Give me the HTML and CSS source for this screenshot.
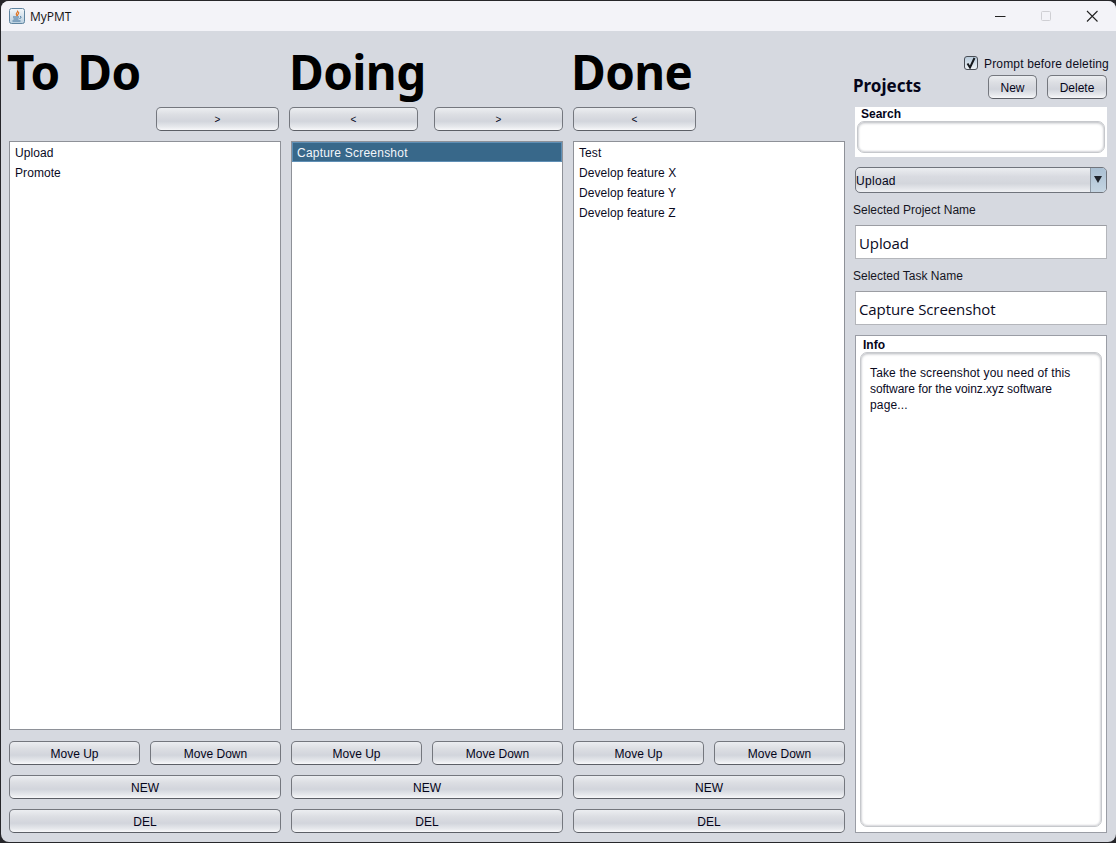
FILE: index.html
```html
<!DOCTYPE html>
<html lang="en">
<head>
<meta charset="utf-8">
<title>MyPMT</title>
<link rel="stylesheet" href="styles.css">
</head>
<body>
<div class="window">
  <header class="titlebar">
    <svg class="app-icon" width="16" height="16" viewBox="0 0 16 16">
      <defs><linearGradient id="ic" x1="0" y1="0" x2="0" y2="1"><stop offset="0" stop-color="#f4f7fa"/><stop offset="1" stop-color="#b9cfe0"/></linearGradient></defs>
      <rect x="0.5" y="0.5" width="15" height="15" rx="2" fill="url(#ic)" stroke="#5f84a0"/>
      <path d="M8.500 2.500c1.200 1.400-2 2.600-1.200 4.200.3.600.8 1 1 1.300-.2-1.400 2.400-2.200 1.200-4.200" fill="none" stroke="#e0701c" stroke-width="1.100"/>
      <path d="M4 9h6M4.500 11h5M3.500 13h8M11 8.500c1.500-.3 1.500 1.700-.5 2" fill="none" stroke="#3f6f99" stroke-width="1"/>
    </svg>
    <span class="app-title">MyPMT</span>
    <div class="controls">
      <svg class="ctl" width="46" height="30" viewBox="0 0 46 30"><path d="M18 15.500h10.500" stroke="#222" stroke-width="1" fill="none"/></svg>
      <svg class="ctl" width="46" height="30" viewBox="0 0 46 30"><rect x="18.500" y="10.500" width="9" height="9" rx="1" fill="none" stroke="#cfcfd4"/></svg>
      <svg class="ctl" width="46" height="30" viewBox="0 0 46 30"><path d="M18 10l10.500 10.500M28.500 10L18 20.500" stroke="#222" stroke-width="1.100" fill="none"/></svg>
    </div>
  </header>
  <main class="content">
    <section class="board">
      <div class="headings">
        <h1 class="col-title">To Do</h1>
        <h1 class="col-title">Doing</h1>
        <h1 class="col-title">Done</h1>
      </div>
      <div class="arrows">
        <button class="btn arrow arrow-short first">&gt;</button>
        <button class="btn arrow arrow-long">&lt;</button>
        <button class="btn arrow arrow-long wide-gap">&gt;</button>
        <button class="btn arrow arrow-short last">&lt;</button>
      </div>
      <div class="triple lists">
        <ul class="list"><li>Upload</li><li>Promote</li></ul>
        <ul class="list"><li class="selected">Capture Screenshot</li></ul>
        <ul class="list"><li>Test</li><li>Develop feature X</li><li>Develop feature Y</li><li>Develop feature Z</li></ul>
      </div>
      <div class="triple moves">
        <div class="move-pair"><button class="btn">Move Up</button><button class="btn">Move Down</button></div>
        <div class="move-pair"><button class="btn">Move Up</button><button class="btn">Move Down</button></div>
        <div class="move-pair"><button class="btn">Move Up</button><button class="btn">Move Down</button></div>
      </div>
      <div class="triple actions">
        <button class="btn">NEW</button><button class="btn">NEW</button><button class="btn">NEW</button>
      </div>
      <div class="triple actions">
        <button class="btn">DEL</button><button class="btn">DEL</button><button class="btn">DEL</button>
      </div>
    </section>
    <aside class="side">
      <label class="prompt">
        <span class="check"><svg width="10" height="12" viewBox="0 0 10 12"><path d="M1.500 6.500L4 10.500L8.500 1" fill="none" stroke="#15181c" stroke-width="2"/></svg></span>
        <span class="prompt-text">Prompt before deleting</span>
      </label>
      <div class="projects-row">
        <h2 class="projects-title">Projects</h2>
        <button class="btn new-btn">New</button>
        <button class="btn delete-btn">Delete</button>
      </div>
      <div class="search-panel">
        <div class="panel-label">Search</div>
        <div class="rounded-field search-field"></div>
      </div>
      <div class="combo"><span class="combo-text">Upload</span><span class="combo-arrow"></span></div>
      <div class="field-label">Selected Project Name</div>
      <div class="text-field">Upload</div>
      <div class="field-label">Selected Task Name</div>
      <div class="text-field">Capture Screenshot</div>
      <div class="info-panel">
        <div class="panel-label info-label">Info</div>
        <div class="rounded-field info-field">Take the screenshot you need of this <span class="tight">software for the voinz.xyz software</span> page...</div>
      </div>
    </aside>
  </main>
</div>
</body>
</html>
```
FILE: styles.css
```css
* { box-sizing: border-box; }
html, body { margin: 0; height: 100%; background: #26262a; overflow: hidden; }
body { padding: 1px 0 1px 1px; font: 12px "Liberation Sans", Arial, sans-serif; color: #000; }
.window {
  height: 841px;
  background: #d6d9e0;
  border-radius: 8px;
  overflow: hidden;
  display: flex;
  flex-direction: column;
}
.titlebar {
  height: 30px;
  flex: none;
  background: #f3f3f8;
  display: flex;
  align-items: center;
  padding-left: 8px;
}
.app-icon { flex: none; margin-top: -1px; }
.app-title { margin-left: 5px; font: 12px "Open Sans", sans-serif; color: #111; }
.controls { margin-left: auto; display: flex; padding-right: 1px; }
.ctl { display: block; }
.content { flex: 1; display: flex; min-height: 0; }
.board { width: 845px; flex: none; padding-left: 8px; display: flex; flex-direction: column; }
.headings { height: 76px; display: grid; grid-template-columns: repeat(3, 272px); column-gap: 10px; }
.col-title {
  margin: 9px 0 0 -2px;
  font: 700 47.5px/64px "Noto Sans", sans-serif;
  letter-spacing: -0.6px;
  word-spacing: 6px;
  color: #000;
}
.arrows { display: flex; height: 24px; }
.first { margin-left: 147px; }
.triple { display: grid; grid-template-columns: repeat(3, 272px); column-gap: 10px; }
.lists { margin-top: 10px; height: 589px; }
.list {
  margin: 0;
  padding: 0;
  list-style: none;
  background: #fff;
  border: 1px solid #8e9198;
}
.list li { height: 20px; line-height: 22px; padding-left: 5px; color: #0a0a1e; letter-spacing: 0.07px; }
.list .selected {
  background: #38688a;
  color: #f2f6fa;
  border: 1px solid #5f8fb5;
  line-height: 20px;
  padding-left: 4px;
  letter-spacing: 0.22px;
}
.moves { margin-top: 11px; height: 24px; }
.move-pair { display: grid; grid-template-columns: 131px 131px; column-gap: 10px; }
.actions { margin-top: 10px; height: 24px; }
.btn {
  display: block;
  width: 100%;
  height: 24px;
  padding: 1px 0 0;
  border: 1px solid #74777e;
  border-bottom-color: #5c5f66;
  border-radius: 5px;
  background: linear-gradient(#eceef1 0%, #dcdee3 30%, #d2d5dc 60%, #e6e8ec 85%, #f8f8fa 100%);
  font: 12px "Liberation Sans", Arial, sans-serif;
  color: #05051a;
  text-align: center;
}
.arrow.btn { font-size: 10px; flex: none; }
.arrow-short.btn { width: 123px; }
.arrow-long.btn { width: 129px; margin-left: 10px; }
.arrow-short.last { margin-left: 10px; }
.arrow-long.wide-gap { margin-left: 16px; }
.side { width: 270px; flex: none; padding: 25px 0 0 7px; display: flex; flex-direction: column; }
.prompt { display: flex; align-items: center; height: 14px; margin-left: 111px; white-space: nowrap; color: #0d0d1c; }
.prompt-text { letter-spacing: 0.16px; padding-top: 1px; }
.check {
  width: 14px;
  height: 14px;
  margin-right: 6px;
  border: 1px solid #4a4e56;
  border-radius: 3px;
  background: linear-gradient(#b9cbdb, #eef2f6);
  display: flex;
  align-items: center;
  justify-content: center;
}
.projects-row { display: flex; align-items: flex-start; height: 32px; margin-top: 5px; }
.projects-title { margin: -1px 0 0; width: 135px; font: 700 17px/24px "Noto Sans", sans-serif; color: #05051a; }
.new-btn.btn { width: 49px; flex: none; }
.delete-btn.btn { width: 60px; margin-left: 10px; flex: none; }
.search-panel { margin-left: 2px; width: 252px; height: 50px; background: #fff; padding: 0 2px; flex: none; }
.panel-label { font-weight: 700; line-height: 14px; color: #05051a; }
.search-panel .panel-label { padding-left: 4px; }
.rounded-field {
  background: #fff;
  border: 1px solid #c6c8cc;
  border-radius: 7px;
  box-shadow: inset 0 1px 3px #b4b6bb, inset 0 -1px 2px #dddee1;
}
.search-field { height: 32px; }
.combo {
  margin: 10px 0 0 2px;
  width: 252px;
  height: 26px;
  flex: none;
  border: 1px solid #70747c;
  border-radius: 5px;
  background: linear-gradient(#eceef1 0%, #d9dbe1 35%, #d3d6dc 65%, #f0f1f4 100%);
  display: flex;
  align-items: center;
  overflow: hidden;
}
.combo-text { flex: 1; padding: 2px 0 0; color: #05051a; letter-spacing: 0.3px; }
.combo-arrow {
  position: relative;
  width: 16px;
  height: 100%;
  background: linear-gradient(#aac0d3, #c5d5e2);
  border-left: 1px solid #8e9aa6;
}
.combo-arrow::after {
  content: "";
  position: absolute;
  left: 3px;
  top: 8px;
  border-left: 4px solid transparent;
  border-right: 4px solid transparent;
  border-top: 7px solid #1f242c;
}
.field-label { margin-top: 10px; height: 14px; line-height: 14px; color: #15151f; flex: none; margin-bottom: 8px; }
.text-field {
  margin-left: 2px;
  width: 252px;
  height: 34px;
  flex: none;
  padding-left: 3px;
  background: #fff;
  border: 1px solid #b4b6bb;
  border-top-color: #9b9da3;
  font: 15px/34px "Open Sans", sans-serif;
  letter-spacing: -0.1px;
  color: #0a0a1e;
}
.info-panel {
  margin: 10px 0 0 2px;
  width: 252px;
  height: 498px;
  flex: none;
  background: #fff;
  border: 1px solid #9a9da5;
  padding: 0 4px 5px;
  display: flex;
  flex-direction: column;
}
.info-label { height: 16px; padding: 2px 0 0 3px; flex: none; }
.info-field { flex: 1; padding: 12px 22px 0 9px; line-height: 16px; color: #0a0a1e; letter-spacing: 0.14px; }
.tight { letter-spacing: -0.06px; }
```
